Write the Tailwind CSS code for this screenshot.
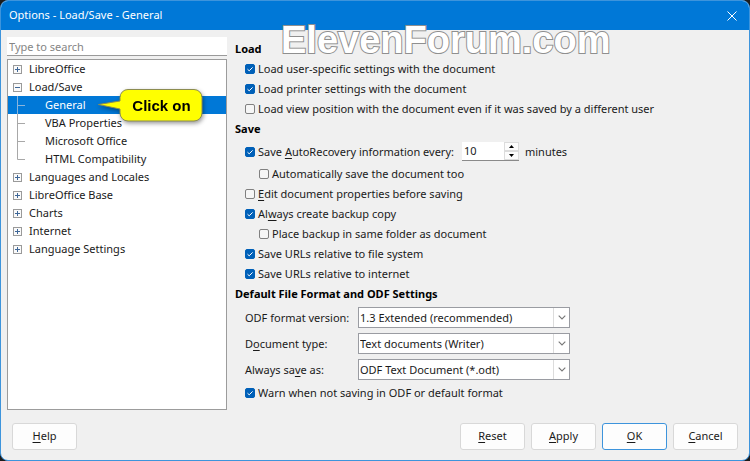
<!DOCTYPE html>
<html lang="en">
<head>
    <meta charset="UTF-8">
    <meta name="viewport" content="width=device-width, initial-scale=1.0">
    <title>Options - Load/Save - General</title>
    <script src="https://cdn.jsdelivr.net/npm/@tailwindcss/browser@4"></script>
</head>
<body class="bg-[#1c1c1c]">
    <!-- Icons -->
    <svg class="hidden">
        <symbol id="plus" viewBox="0 0 9 9">
            <rect x="0.5" y="0.5" width="8" height="8" fill="#fafafa" stroke="#9a9a9a"/>
            <path d="M2 4.5h5M4.5 2v5" stroke="#3f6798"/>
        </symbol>
        <symbol id="minus" viewBox="0 0 9 9">
            <rect x="0.5" y="0.5" width="8" height="8" fill="#fafafa" stroke="#9a9a9a"/>
            <path d="M2 4.5h5" stroke="#3f6798"/>
        </symbol>
        <symbol id="check" viewBox="0 0 10 10">
            <path d="M2.5 5.2l1.7 1.6 3.4-3.4" fill="none" stroke="#fff"/>
        </symbol>
        <symbol id="chevron" viewBox="0 0 8 5">
            <path d="M0.7 0.7L4 4l3.3-3.3" fill="none" stroke="#777" stroke-width="1.1"/>
        </symbol>
    </svg>

    <div class="flex flex-col min-h-screen rounded-lg overflow-hidden bg-[#f0f0f0] border border-[#3d94dc] text-[11px] text-[#1a1a1a] font-['Noto_Sans','Open_Sans',sans-serif]">
        <!-- Title bar -->
        <header class="flex items-center justify-between h-[29px] pl-2 pr-3 bg-[#0078d7] text-white">
            <h1>Options - Load/Save - General</h1>
            <button type="button" aria-label="Close">
                <svg class="w-[10px] h-[10px]" viewBox="0 0 10 10"><path d="M0.5 0.5l9 9M9.5 0.5l-9 9" stroke="#fff"/></svg>
            </button>
        </header>

        <div class="flex flex-1 gap-2 px-[6px]">
            <!-- Category tree -->
            <nav class="flex flex-col w-[220px] pt-[7px]">
                <input type="text" aria-label="Search" placeholder="Type to search"
                    class="h-[19px] px-[2px] bg-white border-b border-[#9a9a9a] placeholder:text-[#858585] outline-none">
                <ul class="relative flex-1 mt-[3px] border border-[#9c9c9c] bg-white leading-[18px]">
                    <li class="flex items-center gap-[7px] pl-[5px]"><svg class="w-[9px] h-[9px]"><use href="#plus"/></svg>LibreOffice</li>
                    <li>
                        <div class="flex items-center gap-[7px] pl-[5px]"><svg class="w-[9px] h-[9px]"><use href="#minus"/></svg>Load/Save</div>
                        <ul>
                            <li class="flex items-center gap-5 pl-[9px] bg-[#0078d7] text-white"><svg class="w-2 h-[18px]" viewBox="0 0 8 18"><path d="M0.5 0v18M0 9.5h8" stroke="#8ab4dc"/></svg><a href="#">General</a></li>
                            <li class="flex items-center gap-5 pl-[9px]"><svg class="w-2 h-[18px]" viewBox="0 0 8 18"><path d="M0.5 0v18M0 9.5h8" stroke="#a8a8a8"/></svg><a href="#">VBA Properties</a></li>
                            <li class="flex items-center gap-5 pl-[9px]"><svg class="w-2 h-[18px]" viewBox="0 0 8 18"><path d="M0.5 0v18M0 9.5h8" stroke="#a8a8a8"/></svg><a href="#">Microsoft Office</a></li>
                            <li class="flex items-center gap-5 pl-[9px]"><svg class="w-2 h-[18px]" viewBox="0 0 8 18"><path d="M0.5 0v9.5h7.500" fill="none" stroke="#a8a8a8"/></svg><a href="#">HTML Compatibility</a></li>
                        </ul>
                    </li>
                    <li class="flex items-center gap-[7px] pl-[5px]"><svg class="w-[9px] h-[9px]"><use href="#plus"/></svg>Languages and Locales</li>
                    <li class="flex items-center gap-[7px] pl-[5px]"><svg class="w-[9px] h-[9px]"><use href="#plus"/></svg>LibreOffice Base</li>
                    <li class="flex items-center gap-[7px] pl-[5px]"><svg class="w-[9px] h-[9px]"><use href="#plus"/></svg>Charts</li>
                    <li class="flex items-center gap-[7px] pl-[5px]"><svg class="w-[9px] h-[9px]"><use href="#plus"/></svg>Internet</li>
                    <li class="flex items-center gap-[7px] pl-[5px]"><svg class="w-[9px] h-[9px]"><use href="#plus"/></svg>Language Settings</li>
                </ul>
            </nav>

            <!-- Settings -->
            <main class="flex-1 pt-[9px] leading-5">
                <h2 class="font-bold text-black">Load</h2>
                <div class="pl-[10px]">
                    <label class="flex items-center gap-[3px]"><span class="relative size-[10px]"><input type="checkbox" checked class="peer block size-[10px] appearance-none rounded-[2px] border border-[#808080] bg-[#f6f6f6] checked:border-[#0060b8] checked:bg-[#0060b8]"><svg class="absolute inset-0 size-[10px] hidden peer-checked:block pointer-events-none"><use href="#check"/></svg></span><span>Load user-specific settings with the document</span></label>
                    <label class="flex items-center gap-[3px]"><span class="relative size-[10px]"><input type="checkbox" checked class="peer block size-[10px] appearance-none rounded-[2px] border border-[#808080] bg-[#f6f6f6] checked:border-[#0060b8] checked:bg-[#0060b8]"><svg class="absolute inset-0 size-[10px] hidden peer-checked:block pointer-events-none"><use href="#check"/></svg></span><span>Load printer settings with the document</span></label>
                    <label class="flex items-center gap-[3px]"><span class="relative size-[10px]"><input type="checkbox" class="peer block size-[10px] appearance-none rounded-[2px] border border-[#808080] bg-[#f6f6f6] checked:border-[#0060b8] checked:bg-[#0060b8]"><svg class="absolute inset-0 size-[10px] hidden peer-checked:block pointer-events-none"><use href="#check"/></svg></span><span>Load view position with the document even if it was saved by a different user</span></label>
                </div>

                <h2 class="font-bold text-black">Save</h2>
                <div class="pl-[10px]">
                    <div class="flex items-center h-[25px]">
                        <label class="flex items-center gap-[3px]"><span class="relative size-[10px]"><input type="checkbox" checked class="peer block size-[10px] appearance-none rounded-[2px] border border-[#808080] bg-[#f6f6f6] checked:border-[#0060b8] checked:bg-[#0060b8]"><svg class="absolute inset-0 size-[10px] hidden peer-checked:block pointer-events-none"><use href="#check"/></svg></span><span>Save <u class="underline-offset-2">A</u>utoRecovery information every:</span></label>
                        <div class="flex w-[57px] h-[19px] ml-2 bg-white border-b border-[#8a8a8a]">
                            <input id="minutes" type="text" value="10" class="flex-1 min-w-0 pl-[2px] outline-none">
                            <div class="flex flex-col w-[15px]">
                                <button type="button" aria-label="Increase" class="flex flex-1 items-center justify-center border border-[#dcdcdc] bg-[#fcfcfc]"><svg class="w-[5px] h-[3px]" viewBox="0 0 5 3"><path d="M0 3L2.500 0L5 3z" fill="#000"/></svg></button>
                                <button type="button" aria-label="Decrease" class="flex flex-1 items-center justify-center border border-[#dcdcdc] bg-[#fcfcfc]"><svg class="w-[5px] h-[3px]" viewBox="0 0 5 3"><path d="M0 0L2.500 3L5 0z" fill="#000"/></svg></button>
                            </div>
                        </div>
                        <label for="minutes" class="ml-[6px]">minutes</label>
                    </div>
                    <label class="flex items-center gap-[3px] ml-[14px]"><span class="relative size-[10px]"><input type="checkbox" class="peer block size-[10px] appearance-none rounded-[2px] border border-[#808080] bg-[#f6f6f6] checked:border-[#0060b8] checked:bg-[#0060b8]"><svg class="absolute inset-0 size-[10px] hidden peer-checked:block pointer-events-none"><use href="#check"/></svg></span><span>Automatically save the document too</span></label>
                    <label class="flex items-center gap-[3px]"><span class="relative size-[10px]"><input type="checkbox" class="peer block size-[10px] appearance-none rounded-[2px] border border-[#808080] bg-[#f6f6f6] checked:border-[#0060b8] checked:bg-[#0060b8]"><svg class="absolute inset-0 size-[10px] hidden peer-checked:block pointer-events-none"><use href="#check"/></svg></span><span><u class="underline-offset-2">E</u>dit document properties before saving</span></label>
                    <label class="flex items-center gap-[3px]"><span class="relative size-[10px]"><input type="checkbox" checked class="peer block size-[10px] appearance-none rounded-[2px] border border-[#808080] bg-[#f6f6f6] checked:border-[#0060b8] checked:bg-[#0060b8]"><svg class="absolute inset-0 size-[10px] hidden peer-checked:block pointer-events-none"><use href="#check"/></svg></span><span>Al<u class="underline-offset-2">w</u>ays create backup copy</span></label>
                    <label class="flex items-center gap-[3px] ml-[14px]"><span class="relative size-[10px]"><input type="checkbox" class="peer block size-[10px] appearance-none rounded-[2px] border border-[#808080] bg-[#f6f6f6] checked:border-[#0060b8] checked:bg-[#0060b8]"><svg class="absolute inset-0 size-[10px] hidden peer-checked:block pointer-events-none"><use href="#check"/></svg></span><span>Place backup in same folder as document</span></label>
                    <label class="flex items-center gap-[3px]"><span class="relative size-[10px]"><input type="checkbox" checked class="peer block size-[10px] appearance-none rounded-[2px] border border-[#808080] bg-[#f6f6f6] checked:border-[#0060b8] checked:bg-[#0060b8]"><svg class="absolute inset-0 size-[10px] hidden peer-checked:block pointer-events-none"><use href="#check"/></svg></span><span>Save URLs relative to file system</span></label>
                    <label class="flex items-center gap-[3px]"><span class="relative size-[10px]"><input type="checkbox" checked class="peer block size-[10px] appearance-none rounded-[2px] border border-[#808080] bg-[#f6f6f6] checked:border-[#0060b8] checked:bg-[#0060b8]"><svg class="absolute inset-0 size-[10px] hidden peer-checked:block pointer-events-none"><use href="#check"/></svg></span><span>Save URLs relative to internet</span></label>
                </div>

                <h2 class="font-bold text-black">Default File Format and ODF Settings</h2>
                <div class="pl-[10px]">
                    <div class="grid grid-cols-[113px_212px] items-center gap-y-[5px] pt-[3px] pb-[3px]">
                        <label for="version">ODF format version:</label>
                        <div class="relative">
                            <select id="version" class="block w-full h-[21px] pl-px appearance-none border border-[#9a9ca2] bg-white"><option>1.3 Extended (recommended)</option></select>
                            <span class="absolute right-[1px] inset-y-[1px] flex items-center justify-center w-4 border-l border-[#dcdcdc] pointer-events-none"><svg class="w-2 h-[5px]"><use href="#chevron"/></svg></span>
                        </div>
                        <label for="doctype">D<u class="underline-offset-2">o</u>cument type:</label>
                        <div class="relative">
                            <select id="doctype" class="block w-full h-[21px] pl-px appearance-none border border-[#9a9ca2] bg-white"><option>Text documents (Writer)</option></select>
                            <span class="absolute right-[1px] inset-y-[1px] flex items-center justify-center w-4 border-l border-[#dcdcdc] pointer-events-none"><svg class="w-2 h-[5px]"><use href="#chevron"/></svg></span>
                        </div>
                        <label for="saveas">Always sa<u class="underline-offset-2">v</u>e as:</label>
                        <div class="relative">
                            <select id="saveas" class="block w-full h-[21px] pl-px appearance-none border border-[#9a9ca2] bg-white"><option>ODF Text Document (*.odt)</option></select>
                            <span class="absolute right-[1px] inset-y-[1px] flex items-center justify-center w-4 border-l border-[#dcdcdc] pointer-events-none"><svg class="w-2 h-[5px]"><use href="#chevron"/></svg></span>
                        </div>
                    </div>
                    <label class="flex items-center gap-[3px]"><span class="relative size-[10px]"><input type="checkbox" checked class="peer block size-[10px] appearance-none rounded-[2px] border border-[#808080] bg-[#f6f6f6] checked:border-[#0060b8] checked:bg-[#0060b8]"><svg class="absolute inset-0 size-[10px] hidden peer-checked:block pointer-events-none"><use href="#check"/></svg></span><span>Warn when not saving in ODF or default format</span></label>
                </div>
            </main>
        </div>

        <!-- Buttons -->
        <footer class="flex gap-[6px] pt-[13px] pb-[10px] px-[11px]">
            <button type="button" class="w-[65px] h-[27px] mr-auto rounded-[3px] border border-[#d8d8d8] bg-[#fdfdfd]"><u class="underline-offset-2">H</u>elp</button>
            <button type="button" class="w-[65px] h-[27px] rounded-[3px] border border-[#d8d8d8] bg-[#fdfdfd]"><u class="underline-offset-2">R</u>eset</button>
            <button type="button" class="w-[65px] h-[27px] rounded-[3px] border border-[#d8d8d8] bg-[#fdfdfd]"><u class="underline-offset-2">A</u>pply</button>
            <button type="button" class="w-[65px] h-[27px] rounded-[3px] border border-[#3d94dc] bg-[#fdfdfd]"><u class="underline-offset-2">O</u>K</button>
            <button type="button" class="w-[65px] h-[27px] rounded-[3px] border border-[#d8d8d8] bg-[#fdfdfd]"><u class="underline-offset-2">C</u>ancel</button>
        </footer>
    </div>

    <!-- Watermark -->
    <div class="absolute left-[281px] top-[20px] leading-[40px] text-[38px] font-bold text-white font-['Liberation_Sans',Arial,sans-serif] [-webkit-text-stroke:2px_#8f8f8f] [paint-order:stroke] pointer-events-none">ElevenForum.com</div>

    <!-- Callout -->
    <div class="absolute left-[98px] top-[89px] w-[105px] h-[33px] pointer-events-none drop-shadow-[1px_2px_2px_rgba(0,0,0,0.4)]">
        <svg class="absolute inset-0 w-[105px] h-[33px]" viewBox="0 0 105 33">
            <path d="M30 0.500H96a8 8 0 0 1 8 8V24a8 8 0 0 1-8 8H30a8 8 0 0 1-8-8V20L0.500 15.500L22 12V8.500a8 8 0 0 1 8-8z" fill="#ffff00" stroke="#8c8c50"/>
        </svg>
        <span class="relative block pl-[22px] text-center leading-[33px] text-[15px] font-bold text-black font-['Liberation_Sans',Arial,sans-serif]">Click on</span>
    </div>
</body>
</html>
